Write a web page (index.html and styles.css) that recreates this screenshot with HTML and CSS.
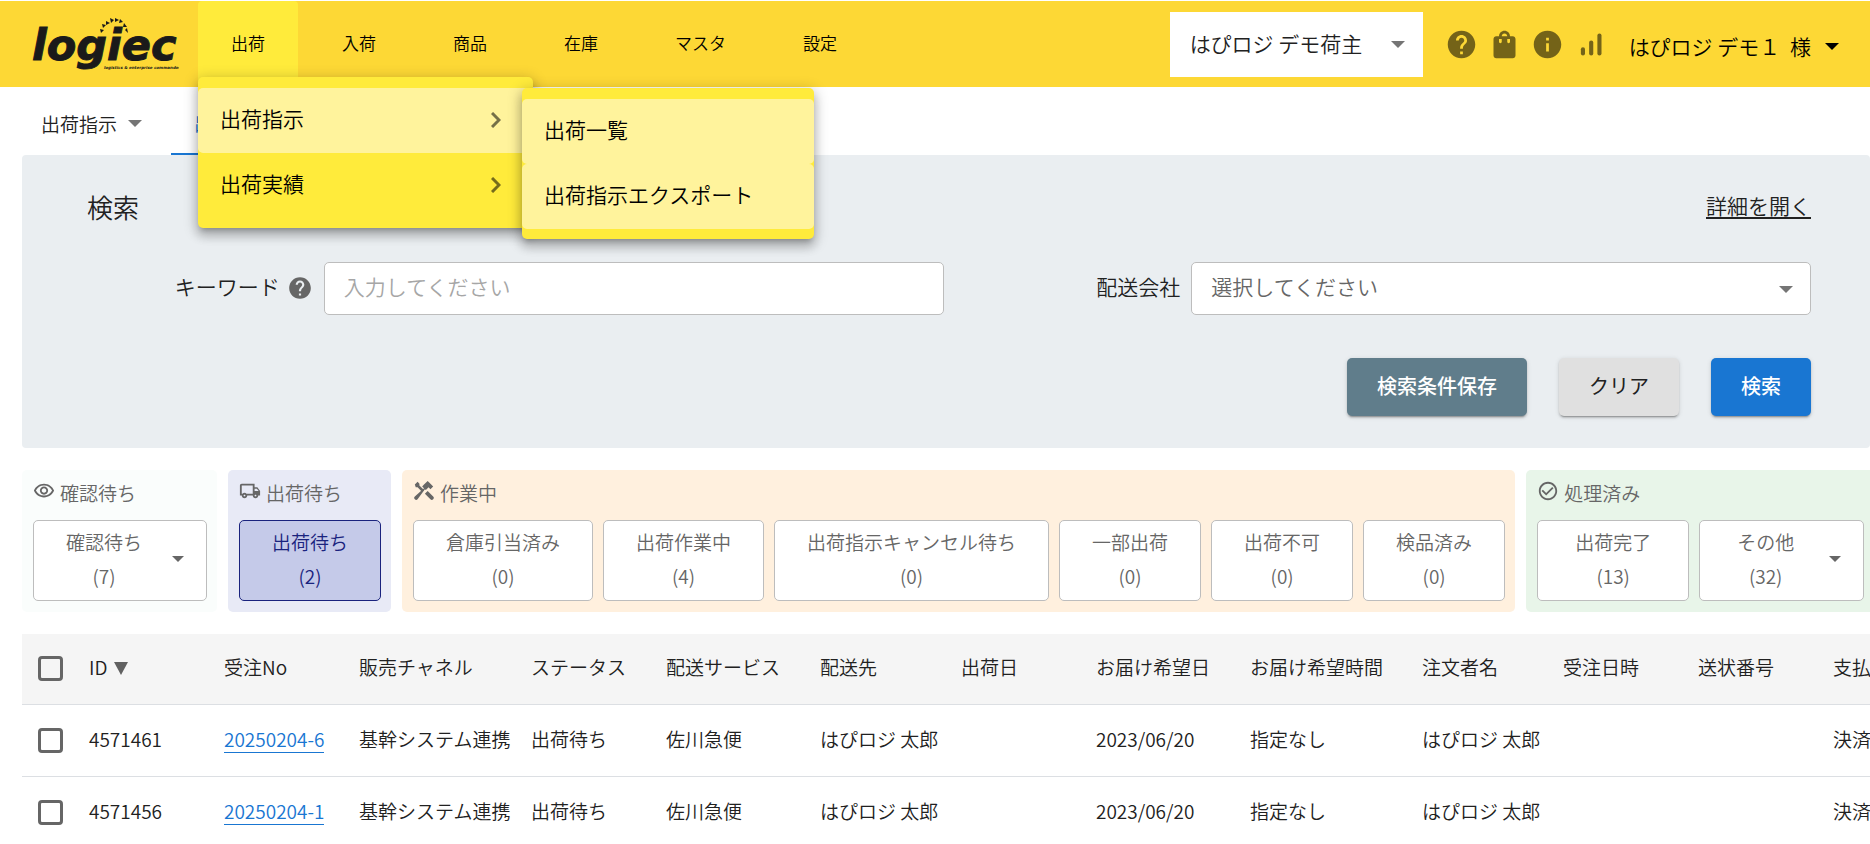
FILE: index.html
```html
<!DOCTYPE html>
<html lang="ja">
<head>
    <meta charset="UTF-8">
    <meta name="viewport" content="width=device-width, initial-scale=1.0">
    <title>出荷一覧 - logiec</title>
    <link rel="stylesheet" href="styles.css">
</head>
<body>
    <header class="header">
        <a class="logo" href="#" aria-label="logiec">
            <svg width="150" height="64" viewBox="0 0 150 64">
                <text class="logo-name" x="3" y="48">logiec</text>
                <text class="logo-tagline" x="75" y="57">logistics &amp; enterprise commander</text>
                <g fill="#1a1a1a">
                    <path d="M71 17l4 1-3 3z"/>
                    <path d="M73 12l4 1-3 3z"/>
                    <path d="M77 9l4 2-4 2z"/>
                    <path d="M81 6l4 2-3 3z"/>
                    <path d="M86 6l4 2-4 2z"/>
                    <path d="M91 7l3 3-4 1z"/>
                    <path d="M95 11l3 4-4 0z"/>
                    <path d="M98 16l1 5-3-3z"/>
                </g>
            </svg>
        </a>

        <nav class="nav">
            <ul class="nav-list">
                <li class="nav-item">
                    <a class="nav-link active" href="#">出荷</a>
                    <ul class="menu">
                        <li class="menu-item">
                            <a class="menu-link selected" href="#">出荷指示
                                <svg class="chevron" viewBox="0 0 10 16"><path d="M1 1l7 7-7 7"/></svg>
                            </a>
                        </li>
                        <li class="menu-item">
                            <a class="menu-link" href="#">出荷実績
                                <svg class="chevron" viewBox="0 0 10 16"><path d="M1 1l7 7-7 7"/></svg>
                            </a>
                        </li>
                    </ul>
                    <ul class="menu submenu">
                        <li class="menu-item"><a class="menu-link selected" href="#">出荷一覧</a></li>
                        <li class="menu-item"><a class="menu-link selected" href="#">出荷指示エクスポート</a></li>
                    </ul>
                </li>
                <li class="nav-item"><a class="nav-link" href="#">入荷</a></li>
                <li class="nav-item"><a class="nav-link" href="#">商品</a></li>
                <li class="nav-item"><a class="nav-link" href="#">在庫</a></li>
                <li class="nav-item"><a class="nav-link" href="#">マスタ</a></li>
                <li class="nav-item"><a class="nav-link" href="#">設定</a></li>
            </ul>
        </nav>

        <div class="header-right">
            <div class="select-wrap shipper">
                <select class="shipper-select" aria-label="荷主">
                    <option>はぴロジ デモ荷主</option>
                </select>
            </div>
            <div class="header-icons">
                <button class="icon-btn" type="button" aria-label="ヘルプ">
                    <svg viewBox="0 0 24 24"><path d="M12 2C6.48 2 2 6.48 2 12s4.48 10 10 10 10-4.48 10-10S17.52 2 12 2zm1 17h-2v-2h2v2zm2.07-7.75l-.9.92C13.45 12.9 13 13.5 13 15h-2v-.5c0-1.1.45-2.1 1.17-2.83l1.24-1.26c.37-.36.59-.86.59-1.41 0-1.1-.9-2-2-2s-2 .9-2 2H8c0-2.21 1.79-4 4-4s4 1.79 4 4c0 .88-.36 1.68-.93 2.25z"/></svg>
                </button>
                <button class="icon-btn" type="button" aria-label="ショップ">
                    <svg viewBox="0 0 24 24"><path d="M18 6h-2c0-2.21-1.79-4-4-4S8 3.79 8 6H6c-1.1 0-2 .9-2 2v12c0 1.1.9 2 2 2h12c1.1 0 2-.9 2-2V8c0-1.1-.9-2-2-2zm-8 4c0 .55-.45 1-1 1s-1-.45-1-1V8h2v2zm2-6c1.1 0 2 .9 2 2h-4c0-1.1.9-2 2-2zm4 6c0 .55-.45 1-1 1s-1-.45-1-1V8h2v2z"/></svg>
                </button>
                <button class="icon-btn" type="button" aria-label="お知らせ">
                    <svg viewBox="0 0 24 24"><path d="M12 2C6.48 2 2 6.48 2 12s4.48 10 10 10 10-4.48 10-10S17.52 2 12 2zm1 15h-2v-6h2v6zm0-8h-2V7h2v2z"/></svg>
                </button>
                <button class="icon-btn" type="button" aria-label="統計">
                    <svg viewBox="0 0 24 24"><rect x="5" y="14" width="3" height="6" rx="1.5"/><rect x="11" y="9" width="3" height="11" rx="1.5"/><rect x="17" y="4" width="3" height="16" rx="1.5"/></svg>
                </button>
            </div>
            <button class="user" type="button"><span>はぴロジ デモ１ <span class="honorific">様</span></span><span class="caret"></span></button>
        </div>
    </header>

    <div class="tabs">
        <button class="tab-select" type="button">出荷指示<span class="caret"></span></button>
        <a class="tab current" href="#">出荷一覧</a>
    </div>

    <main class="main">
        <form class="search">
            <div class="search-head">
                <h2>検索</h2>
                <a class="detail-link" href="#">詳細を開く</a>
            </div>
            <div class="search-fields">
                <div class="field">
                    <label for="keyword">キーワード
                        <svg class="help" viewBox="0 0 24 24"><path d="M12 2C6.48 2 2 6.48 2 12s4.48 10 10 10 10-4.48 10-10S17.52 2 12 2zm1 17h-2v-2h2v2zm2.07-7.75l-.9.92C13.45 12.9 13 13.5 13 15h-2v-.5c0-1.1.45-2.1 1.17-2.83l1.24-1.26c.37-.36.59-.86.59-1.41 0-1.1-.9-2-2-2s-2 .9-2 2H8c0-2.21 1.79-4 4-4s4 1.79 4 4c0 .88-.36 1.68-.93 2.25z"/></svg>
                    </label>
                    <input class="control" type="text" id="keyword" placeholder="入力してください">
                </div>
                <div class="field">
                    <label for="carrier">配送会社</label>
                    <div class="select-wrap">
                        <select class="control" id="carrier">
                            <option>選択してください</option>
                        </select>
                    </div>
                </div>
            </div>
            <div class="search-buttons">
                <button class="btn btn-save" type="button">検索条件保存</button>
                <button class="btn btn-clear" type="reset">クリア</button>
                <button class="btn btn-search" type="button">検索</button>
            </div>
        </form>

        <div class="status-list">
            <section class="status status-check">
                <h3>
                    <svg viewBox="0 0 24 24"><path d="M12 6c3.79 0 7.17 2.13 8.82 5.5C19.17 14.87 15.79 17 12 17s-7.17-2.13-8.82-5.5C4.83 8.13 8.21 6 12 6m0-2C7 4 2.73 7.11 1 11.5 2.73 15.89 7 19 12 19s9.27-3.11 11-7.5C21.27 7.11 17 4 12 4zm0 5c1.38 0 2.5 1.12 2.5 2.5S13.38 14 12 14s-2.5-1.12-2.5-2.5S10.62 9 12 9m0-2c-2.48 0-4.5 2.02-4.5 4.5S9.52 16 12 16s4.5-2.02 4.5-4.5S14.48 7 12 7z"/></svg>
                    確認待ち
                </h3>
                <div class="status-buttons">
                    <button class="status-btn has-menu" type="button"><span>確認待ち<br>(7)</span><span class="caret small"></span></button>
                </div>
            </section>
            <section class="status status-wait">
                <h3>
                    <svg viewBox="0 0 24 24"><path d="M20 8h-3V4H3c-1.1 0-2 .9-2 2v11h2c0 1.66 1.34 3 3 3s3-1.34 3-3h6c0 1.66 1.34 3 3 3s3-1.34 3-3h2v-5l-3-4zM6 18c-.55 0-1-.45-1-1s.45-1 1-1 1 .45 1 1-.45 1-1 1zm9-3H8.22c-.55-.61-1.33-1-2.22-1s-1.67.39-2.22 1H3V6h12v9zm3 3c-.55 0-1-.45-1-1s.45-1 1-1 1 .45 1 1-.45 1-1 1zm-1-6V9.5h2.5l1.96 2.5H17z"/></svg>
                    出荷待ち
                </h3>
                <div class="status-buttons">
                    <button class="status-btn selected" type="button">出荷待ち<br>(2)</button>
                </div>
            </section>
            <section class="status status-work">
                <h3>
                    <svg viewBox="0 0 24 24"><path d="M2 5l3-3 2 2v2l5 5-2 2-5-5H3z"/><path d="M14 14l2-2 6 6c1 1 1 2 0 3s-2 1-3 0l-6-6z"/><path d="M12 5l4-4 2 2 4 4-3 3-2-2-3 3-1-1-8 11c-1 1-2 1-3 0s-1-2 0-3l10-9-2-2z"/></svg>
                    作業中
                </h3>
                <div class="status-buttons">
                    <button class="status-btn" type="button">倉庫引当済み<br>(0)</button>
                    <button class="status-btn" type="button">出荷作業中<br>(4)</button>
                    <button class="status-btn" type="button">出荷指示キャンセル待ち<br>(0)</button>
                    <button class="status-btn" type="button">一部出荷<br>(0)</button>
                    <button class="status-btn" type="button">出荷不可<br>(0)</button>
                    <button class="status-btn" type="button">検品済み<br>(0)</button>
                </div>
            </section>
            <section class="status status-done">
                <h3>
                    <svg viewBox="0 0 24 24"><path d="M16.59 7.58L10 14.17l-3.59-3.58L5 12l5 5 8-8zM12 2C6.48 2 2 6.48 2 12s4.48 10 10 10 10-4.48 10-10S17.52 2 12 2zm0 18c-4.42 0-8-3.58-8-8s3.58-8 8-8 8 3.58 8 8-3.58 8-8 8z"/></svg>
                    処理済み
                </h3>
                <div class="status-buttons">
                    <button class="status-btn" type="button">出荷完了<br>(13)</button>
                    <button class="status-btn has-menu" type="button"><span>その他<br>(32)</span><span class="caret small"></span></button>
                </div>
            </section>
        </div>

        <div class="table-wrap">
            <table class="orders">
                <colgroup>
                    <col class="col-check">
                    <col class="col">
                    <col class="col">
                    <col class="col-xl">
                    <col class="col">
                    <col class="col-lg">
                    <col class="col-md">
                    <col class="col">
                    <col class="col-lg">
                    <col class="col-xl">
                    <col class="col-md">
                    <col class="col">
                    <col class="col">
                    <col class="col">
                </colgroup>
                <thead>
                    <tr>
                        <th><input type="checkbox" aria-label="すべて選択"></th>
                        <th>ID<span class="sort"></span></th>
                        <th>受注No</th>
                        <th>販売チャネル</th>
                        <th>ステータス</th>
                        <th>配送サービス</th>
                        <th>配送先</th>
                        <th>出荷日</th>
                        <th>お届け希望日</th>
                        <th>お届け希望時間</th>
                        <th>注文者名</th>
                        <th>受注日時</th>
                        <th>送状番号</th>
                        <th>支払い方法</th>
                    </tr>
                </thead>
                <tbody>
                    <tr>
                        <td><input type="checkbox" aria-label="4571461を選択"></td>
                        <td>4571461</td>
                        <td><a class="order-link" href="#">20250204-6</a></td>
                        <td>基幹システム連携</td>
                        <td>出荷待ち</td>
                        <td>佐川急便</td>
                        <td>はぴロジ 太郎</td>
                        <td></td>
                        <td>2023/06/20</td>
                        <td>指定なし</td>
                        <td>はぴロジ 太郎</td>
                        <td></td>
                        <td></td>
                        <td>決済なし</td>
                    </tr>
                    <tr>
                        <td><input type="checkbox" aria-label="4571456を選択"></td>
                        <td>4571456</td>
                        <td><a class="order-link" href="#">20250204-1</a></td>
                        <td>基幹システム連携</td>
                        <td>出荷待ち</td>
                        <td>佐川急便</td>
                        <td>はぴロジ 太郎</td>
                        <td></td>
                        <td>2023/06/20</td>
                        <td>指定なし</td>
                        <td>はぴロジ 太郎</td>
                        <td></td>
                        <td></td>
                        <td>決済なし</td>
                    </tr>
                </tbody>
            </table>
        </div>
    </main>
</body>
</html>
```

FILE: styles.css
```css
* {
    box-sizing: border-box;
}
body {
    margin: 0;
    height: 100vh;
    overflow: hidden;
    font-family: "Noto Sans CJK JP", sans-serif;
    font-size: 19px;
    font-weight: 350;
    color: #212121;
    background: #fff;
}
ul {
    list-style: none;
    margin: 0;
    padding: 0;
}
a {
    color: inherit;
    text-decoration: none;
}
button,
input,
select {
    font: inherit;
    color: inherit;
    cursor: pointer;
}
h2,
h3 {
    margin: 0;
    font-weight: 350;
}

/* header */
.header {
    display: flex;
    height: 87px;
    border-top: 1px solid #fff;
    background: #fdd835;
    color: #000;
}
.logo {
    width: 198px;
    padding: 11px 0 0 29px;
}
.logo-name {
    font: italic bold 43px "DejaVu Sans", sans-serif;
    fill: #1a1a1a;
    stroke: #1a1a1a;
    stroke-width: 1px;
}
.logo-tagline {
    font: italic bold 4px "DejaVu Sans", sans-serif;
    fill: #1a1a1a;
}
.nav-list {
    display: flex;
    gap: 11px;
    height: 100%;
}
.nav-item {
    position: relative;
}
.nav-link {
    display: block;
    height: 100%;
    padding: 0 33px;
    font-size: 17px;
    line-height: 83px;
    border-radius: 4px;
    white-space: nowrap;
}
.nav-link.active {
    background: #ffeb3b;
}
.menu {
    position: absolute;
    top: 76px;
    left: 0;
    z-index: 10;
    width: 335px;
    padding: 11px 0 10px;
    border-radius: 5px;
    background: #ffeb3b;
    box-shadow: 0 5px 5px -3px rgba(0, 0, 0, 0.2), 0 8px 10px 1px rgba(0, 0, 0, 0.14), 0 3px 14px 2px rgba(0, 0, 0, 0.2);
}
.submenu {
    top: 87px;
    left: 324px;
    z-index: 11;
    width: 292px;
}
.menu-link {
    display: flex;
    justify-content: space-between;
    align-items: center;
    height: 65px;
    padding: 0 32px 5px 22px;
    border-radius: 5px;
    font-size: 21px;
    white-space: nowrap;
}
.menu-link.selected {
    background: #fff39c;
}
.chevron {
    width: 10px;
    height: 16px;
    margin-top: 4px;
    fill: none;
    stroke: rgba(0, 0, 0, 0.54);
    stroke-width: 3;
}
.header-right {
    display: flex;
    align-items: center;
    margin-left: auto;
    padding-right: 31px;
    font-size: 21px;
}
.select-wrap {
    position: relative;
}
.select-wrap select {
    width: 100%;
    appearance: none;
}
.select-wrap::after {
    content: "";
    position: absolute;
    top: 50%;
    right: 18px;
    margin-top: -3px;
    border: 7px solid transparent;
    border-top-color: #757575;
    border-bottom: 0;
    pointer-events: none;
}
.shipper {
    width: 253px;
}
.shipper-select {
    height: 65px;
    padding: 0 40px 3px 20px;
    border: 0;
    background: #fff;
    color: #212121;
}
.header-icons {
    display: flex;
    gap: 10px;
    padding: 0 22px;
}
.icon-btn {
    width: 33px;
    height: 33px;
    padding: 0;
    border: 0;
    background: none;
}
.icon-btn svg {
    display: block;
    fill: rgba(0, 0, 0, 0.54);
}
.user {
    display: flex;
    align-items: center;
    gap: 14px;
    padding: 4px 0 0;
    border: 0;
    background: none;
}
.honorific {
    margin-left: 5px;
}
.caret {
    border: 7px solid transparent;
    border-top-color: currentColor;
    border-bottom: 0;
}
.caret.small {
    border-width: 6px;
    border-bottom: 0;
}

/* tabs */
.tabs {
    display: flex;
    height: 68px;
    padding-left: 41px;
}
.tab-select {
    display: flex;
    align-items: center;
    gap: 11px;
    padding: 4px 29px 0 0;
    border: 0;
    background: none;
}
.tab-select .caret {
    color: #757575;
}
.tab {
    padding: 0 23px;
    line-height: 72px;
    color: #1976d2;
}
.tab.current {
    border-bottom: 2px solid #1976d2;
}

/* search */
.main {
    padding-left: 22px;
}
.search {
    padding: 25px 59px 32px 54px;
    border-radius: 4px;
    background: #eaeef1;
}
.search-head {
    display: flex;
    justify-content: space-between;
    align-items: center;
    height: 52px;
    padding-left: 11px;
}
.search-head h2 {
    font-size: 26px;
}
.detail-link {
    font-size: 21px;
    line-height: 24px;
    border-bottom: 2px solid #212121;
}
.search-fields {
    display: grid;
    grid-template-columns: 1fr 1fr;
    margin-top: 30px;
    font-size: 21px;
}
.field {
    display: grid;
    grid-template-columns: 2fr 5fr;
    align-items: center;
}
.field label {
    display: flex;
    justify-content: flex-end;
    align-items: center;
    gap: 7px;
    padding: 0 11px 5px 0;
}
.help {
    width: 26px;
    height: 26px;
    margin-top: 4px;
    fill: #666;
}
.control {
    display: block;
    width: 100%;
    height: 53px;
    padding: 0 19px 5px;
    border: 1px solid #bdbdbd;
    border-radius: 5px;
    background: #fff;
}
select.control {
    color: #666;
}
.control::placeholder {
    color: #a6a6a6;
}
.search-buttons {
    display: flex;
    justify-content: flex-end;
    gap: 32px;
    margin-top: 43px;
}
.btn {
    height: 58px;
    padding: 0 30px 4px;
    border: 0;
    border-radius: 5px;
    font-size: 20px;
    font-weight: 500;
    color: #fff;
    box-shadow: 0 3px 1px -2px rgba(0, 0, 0, 0.2), 0 2px 2px rgba(0, 0, 0, 0.14), 0 1px 5px rgba(0, 0, 0, 0.12);
}
.btn-save {
    background: #607d8b;
}
.btn-clear {
    background: #e0e0e0;
    font-weight: 400;
    color: #212121;
}
.btn-search {
    background: #1976d2;
}

/* status */
.status-list {
    display: flex;
    gap: 11px;
    margin: 22px 0;
}
.status {
    flex: none;
    padding: 10px 10px 11px 11px;
    border-radius: 5px;
    color: #666;
}
.status h3 {
    display: flex;
    gap: 5px;
    height: 40px;
    font-size: 19px;
    line-height: 26px;
}
.status h3 svg {
    width: 22px;
    height: 22px;
    fill: #666;
}
.status-check {
    background: #fafdfc;
}
.status-wait {
    background: #e8eaf6;
}
.status-work {
    background: #fff0de;
}
.status-done {
    flex: 1 0 auto;
    background: #e8f5e9;
}
.status-buttons {
    display: flex;
    gap: 10px;
}
.status-btn {
    height: 81px;
    padding: 0 32px 3px;
    border: 1px solid #bdbdbd;
    border-radius: 5px;
    background: #fff;
    line-height: 34px;
    white-space: nowrap;
}
.status-btn.selected {
    border-color: #1a237e;
    background: #c5cae9;
    color: #1a237e;
}
.status-btn.has-menu {
    display: flex;
    align-items: center;
    gap: 30px;
    padding-right: 22px;
}
.status-done .status-btn {
    padding-left: 37px;
    padding-right: 37px;
}
.status-done .has-menu {
    gap: 35px;
    padding-right: 22px;
}

/* orders table */
.table-wrap {
    overflow: hidden;
}
.orders {
    width: 1934px;
    table-layout: fixed;
    border-collapse: collapse;
}
.col-check {
    width: 57px;
}
.col {
    width: 135px;
}
.col-md {
    width: 141px;
}
.col-lg {
    width: 154px;
}
.col-xl {
    width: 172px;
}
.orders th,
.orders td {
    padding: 0 10px 4px;
    border-bottom: 1px solid #dcdfe3;
    font-weight: 350;
    text-align: left;
    white-space: nowrap;
}
.orders th {
    height: 70px;
    background: #f5f5f5;
}
.orders td {
    height: 72px;
}
.orders input {
    display: block;
    width: 25px;
    height: 25px;
    margin: 4px 6px 0;
    appearance: none;
    border: 3px solid #666;
    border-radius: 4px;
}
.sort {
    display: inline-block;
    margin-left: 7px;
    border: 7px solid transparent;
    border-top: 13px solid #616161;
    border-bottom: 0;
}
.order-link {
    color: #1976d2;
    border-bottom: 1px solid #1976d2;
}
```
